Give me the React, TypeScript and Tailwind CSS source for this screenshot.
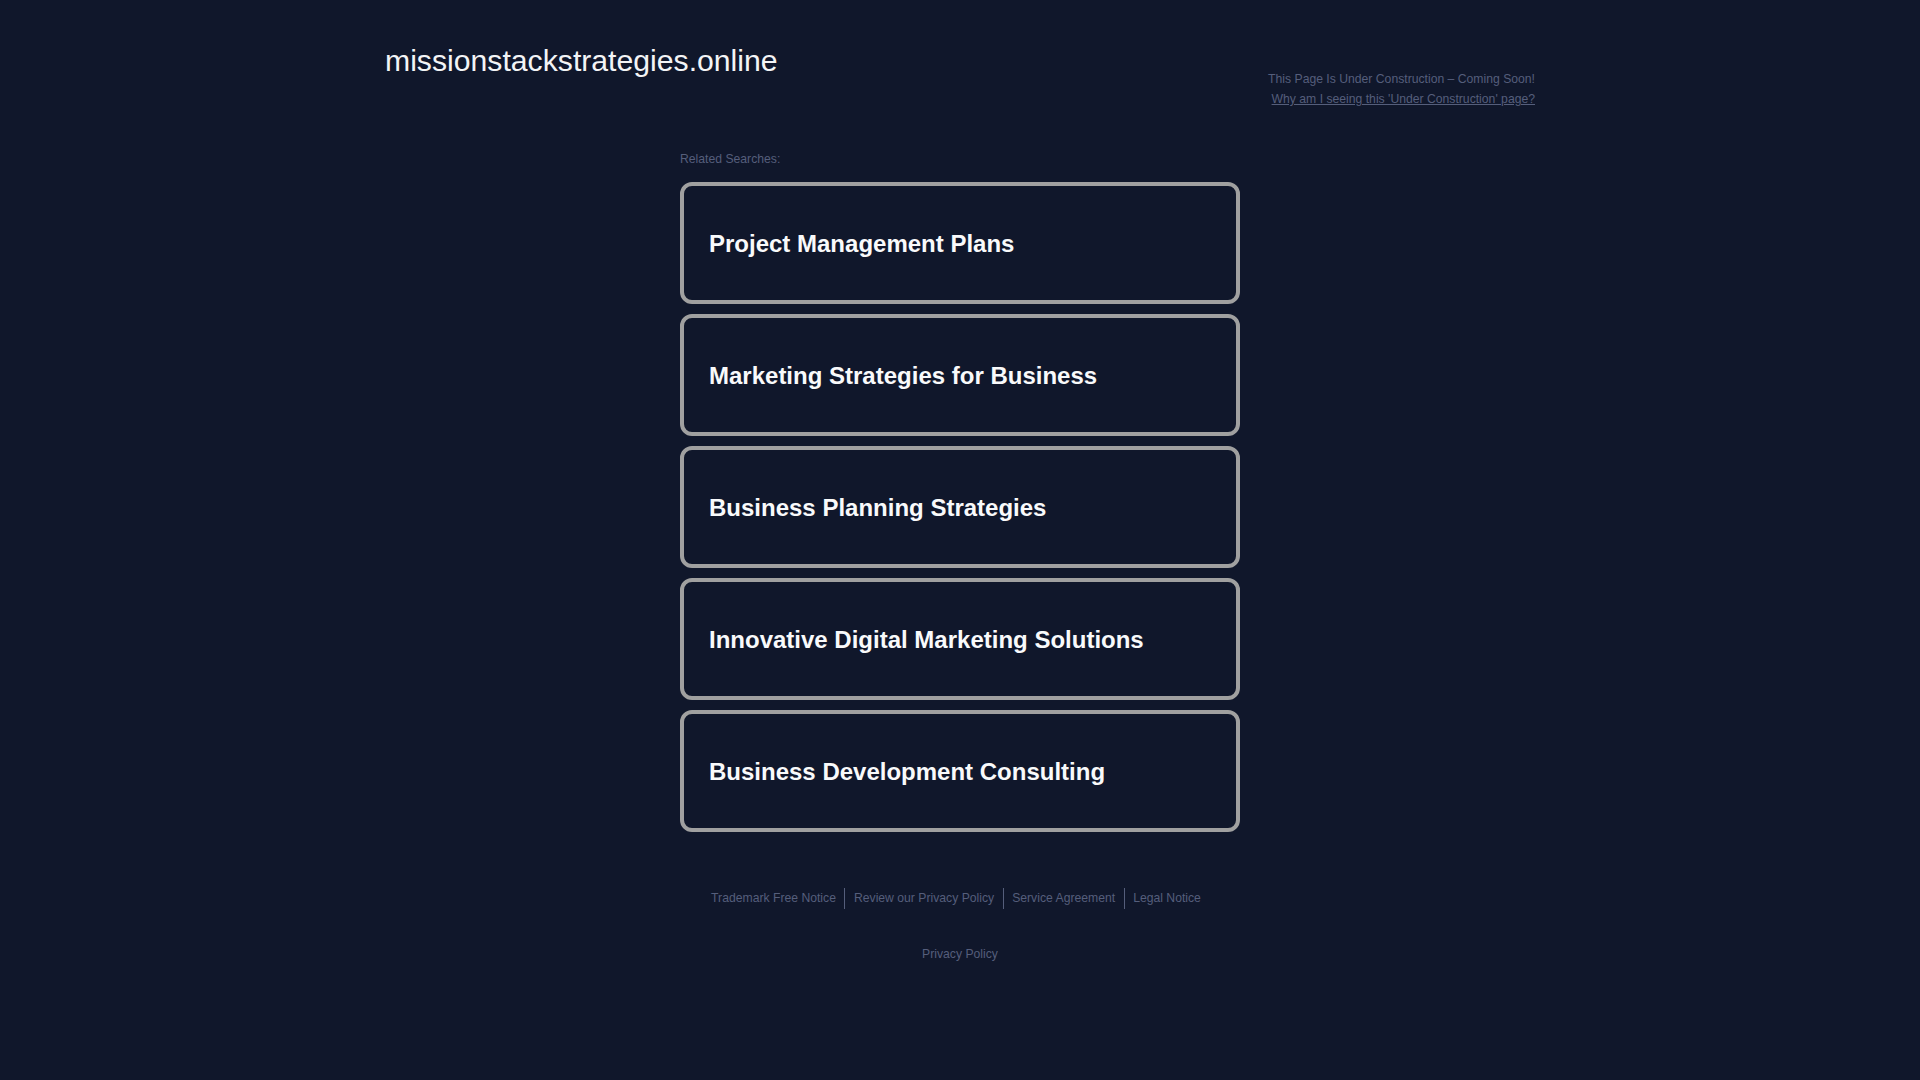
import React from "react";

const items = [
  "Project Management Plans",
  "Marketing Strategies for Business",
  "Business Planning Strategies",
  "Innovative Digital Marketing Solutions",
  "Business Development Consulting",
];

const footer = [
  "Trademark Free Notice",
  "Review our Privacy Policy",
  "Service Agreement",
  "Legal Notice",
];

export default function App() {
  return (
    <div
      className="min-h-screen w-full bg-[#10172b]"
      style={{ fontFamily: '"Liberation Sans", Arial, sans-serif' }}
    >
      <div className="mx-auto flex w-[1150px] items-start justify-between">
        <div className="pt-[44px] text-[30.2px] leading-[34px] text-[#f3f4f6]">
          missionstackstrategies.online
        </div>
        <div className="flex flex-col items-end pt-[69px] text-[12.2px] leading-[20px] text-[#555e7b]">
          <div>This Page Is Under Construction – Coming Soon!</div>
          <a href="#" className="underline">
            Why am I seeing this 'Under Construction' page?
          </a>
        </div>
      </div>

      <div className="mx-auto mt-[42px] w-[560px]">
        <div className="mb-[15px] text-[12.2px] leading-[16px] text-[#555e7b]">
          Related Searches:
        </div>
        <div className="flex flex-col gap-[10px]">
          {items.map((t) => (
            <a
              key={t}
              href="#"
              className="flex h-[122px] items-center rounded-xl border-4 border-[#a0a0a0] pl-[25px] pt-[2px] text-[24px] font-bold text-[#f9fafb]"
            >
              {t}
            </a>
          ))}
        </div>
      </div>

      <div className="mt-[56px] flex justify-center pr-[8px] text-[12.2px] text-[#555e7b]">
        {footer.map((t, i) => (
          <a
            key={t}
            href="#"
            className={
              i === 0
                ? "px-[8.5px] leading-[21px]"
                : "border-l border-[#555e7b] px-[8.5px] leading-[21px]"
            }
          >
            {t}
          </a>
        ))}
      </div>
      <div className="mt-[37px] flex justify-center text-[12.2px] leading-[16px] text-[#555e7b]">
        <a href="#">Privacy Policy</a>
      </div>
    </div>
  );
}
